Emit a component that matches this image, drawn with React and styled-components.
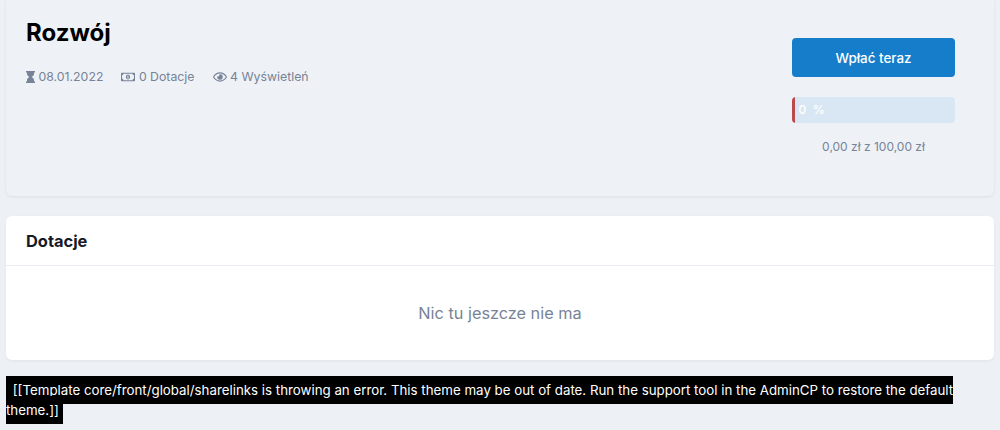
import React from 'react';
import styled, { createGlobalStyle } from 'styled-components';
import { FaRegMoneyBillAlt, FaRegEye } from 'react-icons/fa';

const GlobalStyle = createGlobalStyle`
  html, body {
    margin: 0;
    padding: 0;
    background: #edf0f5;
    font-family: Inter, "Liberation Sans", sans-serif;
    overflow: hidden;
  }
`;

const Page = styled('div')`
  height: 430px;
  padding: 0 6px;
  box-sizing: border-box;
`;

const Hero = styled('section')`
  display: flex;
  justify-content: space-between;
  height: 196px;
  padding: 0 39px 0 20px;
  box-sizing: border-box;
  background: #eef2f7;
  border-radius: 0 0 6px 6px;
  box-shadow: 0 1px 3px rgba(0, 0, 0, 0.07);
`;

const HeroMain = styled('div')`
  padding-top: 17px;
`;

const Title = styled('h1')`
  margin: 0;
  font-size: 24px;
  line-height: 32px;
  font-weight: 700;
  color: #000;
`;

const Meta = styled('ul')`
  display: flex;
  gap: 18px;
  margin: 20px 0 0;
  padding: 0;
  list-style: none;
`;

const MetaItem = styled('li')`
  display: flex;
  align-items: center;
  gap: 3.5px;
  font-size: 12.3px;
  line-height: 16px;
  color: #778396;

  svg {
    width: auto;
    height: ${(p) => p.$icon || 14}px;
    flex: none;
  }
`;

const Side = styled('div')`
  width: 163px;
  padding-top: 38px;
`;

const Button = styled('button')`
  display: block;
  width: 100%;
  height: 39px;
  border: 0;
  border-radius: 4px;
  background: #167dcb;
  color: #fff;
  font-family: inherit;
  font-size: 13.4px;
  font-weight: 500;
  cursor: pointer;
`;

const Progress = styled('div')`
  position: relative;
  height: 26px;
  margin-top: 20px;
  border-radius: 4px;
  background: #d9e6f3;
  overflow: hidden;
`;

const ProgressFill = styled('div')`
  height: 100%;
  background: #bd4a4a;
`;

const ProgressLabel = styled('span')`
  position: absolute;
  left: 6.5px;
  top: 0;
  font-size: 12px;
  font-weight: 500;
  line-height: 26px;
  color: #fff;
  white-space: pre;
`;

const Raised = styled('p')`
  margin: 16px 0 0;
  text-align: center;
  font-size: 12px;
  line-height: 16px;
  color: #778396;
`;

const Card = styled('section')`
  margin-top: 20px;
  background: #fff;
  border-radius: 6px;
  box-shadow: 0 1px 3px rgba(0, 0, 0, 0.06);
`;

const CardHeader = styled('h2')`
  margin: 0;
  padding: 0 20px;
  height: 49px;
  line-height: 50px;
  border-bottom: 1px solid #e9ecf1;
  font-size: 16.4px;
  font-weight: 700;
  color: #171a26;
`;

const Empty = styled('p')`
  margin: 0;
  height: 94px;
  line-height: 94px;
  text-align: center;
  font-size: 16.3px;
  color: #778396;
`;

const ErrorLine = styled('div')`
  margin-top: 20px;
  font-size: 13.3px;
  line-height: 20px;
  color: #fff;

  span {
    background: #000;
    padding: 6px 4px 6px 3px;
  }
`;

const Hourglass = () => (
  <svg viewBox="0 0 9 12" fill="currentColor">
    <path d="M0 0h9v1.5H8V3c0 1.4-1.4 2.3-2.4 3C6.600 6.700 8 7.600 8 9v1.500h1V12H0v-1.500h1V9c0-1.400 1.400-2.300 2.400-3C2.400 5.300 1 4.400 1 3V1.500H0z" />
  </svg>
);

export default function App() {
  const percent = 0;

  return (
    <>
      <GlobalStyle />
      <Page>
        <Hero>
          <HeroMain>
            <Title>Rozwój</Title>
            <Meta>
              <MetaItem $icon={12}><Hourglass />08.01.2022</MetaItem>
              <MetaItem $icon={14}><FaRegMoneyBillAlt />0 Dotacje</MetaItem>
              <MetaItem $icon={14}><FaRegEye />4 Wyświetleń</MetaItem>
            </Meta>
          </HeroMain>
          <Side>
            <Button>Wpłać teraz</Button>
            <Progress>
              <ProgressFill style={{ width: Math.max(percent, 2) + '%' }} />
              <ProgressLabel>{percent}  %</ProgressLabel>
            </Progress>
            <Raised>0,00 zł z 100,00 zł</Raised>
          </Side>
        </Hero>
        <Card>
          <CardHeader>Dotacje</CardHeader>
          <Empty>Nic tu jeszcze nie ma</Empty>
        </Card>
        <ErrorLine>
          <span>&nbsp;[[Template core/front/global/sharelinks is throwing an error. This theme may be out of date. Run the support tool in the AdminCP to restore the default theme.]]</span>
        </ErrorLine>
      </Page>
    </>
  );
}
